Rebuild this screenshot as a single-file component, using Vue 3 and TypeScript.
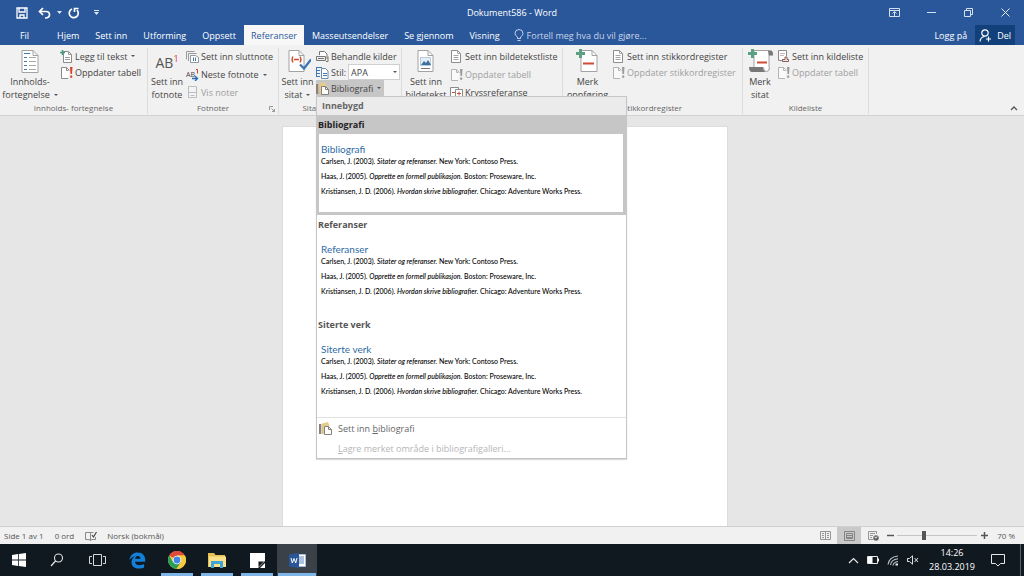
<script setup lang="ts">
import { ref } from 'vue'

interface Small {
  icon: string
  label: string
  arrow?: boolean
  off?: boolean
}
interface Group {
  id: string
  title: string
  icon: string
  lines: string[]
  arrow?: boolean
  launcher?: boolean
  items: Small[]
}

const tabs: string[] = ['Fil', 'Hjem', 'Sett inn', 'Utforming', 'Oppsett', 'Referanser', 'Masseutsendelser', 'Se gjennom', 'Visning']
const active = ref('Referanser')
const zoom = ref(33)
const style = ref('APA')
const chosen = ref('Bibliografi')
const gallery: string[] = ['Bibliografi', 'Referanser', 'Siterte verk']

const groups: Group[] = [
  {
    id: 'toc', title: 'Innholds- fortegnelse', icon: 'b-toc', lines: ['Innholds-', 'fortegnelse'], arrow: true,
    items: [
      { icon: 's-add', label: 'Legg til tekst', arrow: true },
      { icon: 's-update', label: 'Oppdater tabell' },
    ],
  },
  {
    id: 'foot', title: 'Fotnoter', icon: 'b-foot', lines: ['Sett inn', 'fotnote'], launcher: true,
    items: [
      { icon: 's-end', label: 'Sett inn sluttnote' },
      { icon: 's-next', label: 'Neste fotnote', arrow: true },
      { icon: 's-show', label: 'Vis noter', off: true },
    ],
  },
  {
    id: 'cite', title: 'Sitater og bibliografi', icon: 'b-cite', lines: ['Sett inn', 'sitat'], arrow: true,
    items: [],
  },
  {
    id: 'cap', title: 'Bildetekster', icon: 'b-cap', lines: ['Sett inn', 'bildetekst'],
    items: [
      { icon: 's-page', label: 'Sett inn bildetekstliste' },
      { icon: 's-update', label: 'Oppdater tabell', off: true },
      { icon: 's-cross', label: 'Kryssreferanse' },
    ],
  },
  {
    id: 'index', title: 'Stikkordregister', icon: 'b-mark', lines: ['Merk', 'oppføring'],
    items: [
      { icon: 's-page', label: 'Sett inn stikkordregister' },
      { icon: 's-update', label: 'Oppdater stikkordregister', off: true },
    ],
  },
  {
    id: 'auth', title: 'Kildeliste', icon: 'b-auth', lines: ['Merk', 'sitat'],
    items: [
      { icon: 's-auth', label: 'Sett inn kildeliste' },
      { icon: 's-update', label: 'Oppdater tabell', off: true },
    ],
  },
]
</script>

<template>
  <div class="screen">
    <svg class="defs" aria-hidden="true">
      <symbol id="b-toc" viewBox="0 0 26 25">
        <path d="M5 1.500h11l5 5V23.500H5z" fill="#fff" stroke="#a2a2a2" />
        <path d="M16 1.500v5h5" fill="none" stroke="#a2a2a2" />
        <path d="M7 4.500h6M7 8.500h3M7 12.500h3M7 16.500h3M7 20.500h3" stroke="#3d7ab5" />
        <path d="M12 8.500h7M12 12.500h7M12 16.500h7M12 20.500h7" stroke="#a8a8a8" />
      </symbol>
      <symbol id="b-cite" viewBox="0 0 26 25">
        <path d="M4 1.500h10l5 5V22.500H4z" fill="#fff" stroke="#a2a2a2" />
        <path d="M14 1.500v5h5" fill="none" stroke="#a2a2a2" />
        <path d="M8 7.500q-2 3 0 6M15 7.500q2 3 0 6M9 10.500h5" fill="none" stroke="#cf4c33" stroke-width="1.300" />
        <path d="M15 15.500l4 4 7-9" fill="none" stroke="#3b74b5" stroke-width="2.200" />
      </symbol>
      <symbol id="b-cap" viewBox="0 0 26 25">
        <path d="M5 1.500h10l5 5V22.500H5z" fill="#fff" stroke="#a2a2a2" />
        <path d="M15 1.500v5h5" fill="none" stroke="#a2a2a2" />
        <path d="M7.500 8.500h10v8h-10z" fill="#e4eef7" stroke="#b9cad9" />
        <path d="M8 16l3-4 2 2 2-3 3 5z" fill="#3d6f9f" />
        <path d="M8 19.500h9" stroke="#777" />
      </symbol>
      <symbol id="b-mark" viewBox="0 0 26 25">
        <path d="M6 1.500h11l5 5V22.500H6z" fill="#fff" stroke="#a2a2a2" />
        <path d="M17 1.500v5h5" fill="none" stroke="#a2a2a2" />
        <path d="M8 14.500h11" stroke="#cf4c33" stroke-width="2" />
        <path d="M5.500 0v9M1 4.500h9" stroke="#5aa083" stroke-width="3" />
      </symbol>
      <symbol id="b-auth" viewBox="0 0 26 25">
        <path d="M7 1.500h15v19H7z" fill="#fff" stroke="#a2a2a2" />
        <path d="M21 1.500h3q2 0 2 5h-4z" fill="#777" />
        <path d="M2 18h14q0 5 4 5H5q-3 0-3-5z" fill="#777" />
        <path d="M16.500 18.500q0 4 3 4t3-4" fill="#fff" stroke="#999" />
        <path d="M10 13.500h10" stroke="#cf4c33" stroke-width="2" />
        <path d="M5.500 0v9M1 4.500h9" stroke="#5aa083" stroke-width="3" />
      </symbol>
      <symbol id="s-add" viewBox="0 0 13 13">
        <path d="M3.500 1.500h5l3 3v8h-8z" fill="#fff" stroke="#8b8b8b" />
        <path d="M8.500 1.500v3h3M5 7.500h5M5 9.500h5" fill="none" stroke="#9a9a9a" />
        <path d="M2.500 0v5M0 2.500h5" stroke="#4d9878" stroke-width="1.500" />
      </symbol>
      <symbol id="s-update" viewBox="0 0 13 13">
        <path d="M8 12.500H1.500v-11h5l3 3" fill="#fff" stroke="#8b8b8b" />
        <path d="M6.500 1.500v3h2" fill="none" stroke="#8b8b8b" />
        <path d="M10 1h2.500l-.5 7h-1.500zM10.200 9.500h2v2.200h-2z" fill="#d9402b" />
      </symbol>
      <symbol id="s-end" viewBox="0 0 13 13">
        <path d="M.5 9.500v-8h8M2.500 11v-7.500h8" fill="none" stroke="#9a9a9a" />
        <path d="M4.500 5.500h5l3 2v5h-8z" fill="#fff" stroke="#8d99a5" />
        <path d="M7.500 7.500v3.500M9.500 7.500v3.500" stroke="#4679a8" />
      </symbol>
      <symbol id="s-next" viewBox="0 0 13 13">
        <text x="0" y="9" font-size="7" fill="#444" font-family="Open Sans, sans-serif">AB</text>
        <path d="M10 1.500h1.500v4" fill="none" stroke="#d9402b" />
        <path d="M6 10.500h5M9 8l2.500 2.500L9 13" fill="none" stroke="#2f6db3" stroke-width="1.400" />
      </symbol>
      <symbol id="s-show" viewBox="0 0 13 13">
        <path d="M2.500.500v11h8v-11z" fill="#f7f7f7" stroke="#999" />
        <path d="M2.500 6.500h8M4.500 9.500h4" stroke="#999" />
      </symbol>
      <symbol id="s-page" viewBox="0 0 13 13">
        <path d="M1.500.5h6l3 3v9h-9z" fill="#fff" stroke="#8b8b8b" />
        <path d="M7.500.5v3h3M3.500 5.500h5M3.500 7.500h5M3.500 9.500h5" fill="none" stroke="#a5a5a5" />
      </symbol>
      <symbol id="s-cross" viewBox="0 0 13 13">
        <path d="M4 10.500H.5v-9h8V3" fill="#fff" stroke="#8b8b8b" />
        <path d="M5.500 3.500h7v8h-7z" fill="#fff" stroke="#8b8b8b" />
        <path d="M2 6.500h3M7 7.500h4M9 5.500v4" stroke="#c4553d" />
      </symbol>
      <symbol id="s-auth" viewBox="0 0 13 13">
        <path d="M7 10.500H1.500v-10h8V6" fill="#fff" stroke="#8b8b8b" />
        <path d="M3 3.500h5M3 5.500h4" stroke="#c9b8b4" />
        <path d="M5.500 11.500h6v-2h-1.500v-2.500h-2v2.500h-2.500z" fill="#eee" stroke="#8c5a55" />
      </symbol>
      <symbol id="s-manage" viewBox="0 0 13 13">
        <path d="M3.500 5V1.500h5L11 4v5" fill="#fff" stroke="#777" />
        <path d="M.5 6.500h9v4h-9zM2 8.500h6" fill="#eee" stroke="#777" />
        <path d="M10 11.500h2v-5" fill="none" stroke="#777" />
      </symbol>
      <symbol id="s-style" viewBox="0 0 13 13">
        <path d="M1 1.500h5M1 4.500h3M1 7.500h3M1 10.500h3M.5 1v10" stroke="#3d7ab5" />
        <path d="M5.500 2.500h4l2.500 2.500v7.500H5.500z" fill="#fff" stroke="#6f8aa5" />
        <path d="M7 7.500h4M7 9.500h4" stroke="#3d7ab5" />
      </symbol>
      <symbol id="s-bib" viewBox="0 0 13 13">
        <path d="M0 2h2v10H0z" fill="#8b8178" />
        <path d="M2.500 2h2v10h-2z" fill="#b3aaa0" />
        <path d="M3 1.500l6-1.500 1.500 4H5v8H3.500z" fill="#e6cb8b" />
        <path d="M5.500 4.500h4l3 3v5h-7z" fill="#fff" stroke="#85807a" />
        <path d="M9.500 4.500v3h3" fill="none" stroke="#85807a" />
      </symbol>
    </svg>

    <header class="top">
      <div class="titlebar">
        <div class="quick">
          <button aria-label="Lagre"><svg width="12" height="12" viewBox="0 0 12 12"><path d="M1 1h10v10H1zM3 1v4h6V1M4 11V8h4v3" fill="none" stroke="#fff" stroke-width="1.300" /></svg></button>
          <button aria-label="Angre"><svg width="13" height="12" viewBox="0 0 13 12"><path d="M5 1L1.500 4.500 5 8M2 4.500h6q3.500 0 3.500 3.200T7 11" fill="none" stroke="#fff" stroke-width="1.700" /></svg></button>
          <button class="tiny" aria-label="Flere angrevalg"><svg width="5" height="3" viewBox="0 0 5 3"><path d="M0 0h5L2.500 3z" fill="#dfe7f3" /></svg></button>
          <button aria-label="Gjenta"><svg width="12" height="12" viewBox="0 0 12 12"><path d="M4 2a4.500 4.500 0 1 0 5 1M6.500 5V1.500H10.500" fill="none" stroke="#fff" stroke-width="1.700" /></svg></button>
          <button class="more" aria-label="Tilpass"><svg width="5" height="5" viewBox="0 0 5 5"><path d="M0 .5h5" stroke="#dfe7f3" /><path d="M0 2h5L2.500 5z" fill="#dfe7f3" /></svg></button>
        </div>
        <h1>Dokument586 - Word</h1>
        <div class="window">
          <button aria-label="Båndvisning"><svg width="11" height="9" viewBox="0 0 11 9"><path d="M.5.5h10v8H.5zM.5 2.500h10M5.500 8V4M3.500 5.500l2-2 2 2" fill="none" stroke="#d5dfee" /></svg></button>
          <button aria-label="Minimer"><svg width="9" height="9" viewBox="0 0 9 9"><path d="M0 4.500h9" stroke="#d5dfee" /></svg></button>
          <button aria-label="Gjenopprett"><svg width="9" height="9" viewBox="0 0 9 9"><path d="M.5 2.500h6v6h-6zM2.500 2V.5h6v6H7" fill="none" stroke="#d5dfee" /></svg></button>
          <button aria-label="Lukk"><svg width="9" height="9" viewBox="0 0 9 9"><path d="M.5.5l8 8M8.500.5l-8 8" stroke="#e5ebf5" /></svg></button>
        </div>
      </div>
      <nav class="tabs">
        <button v-for="t in tabs" :key="t" :class="{ active: t === active, file: t === 'Fil' }" @click="active = t">{{ t }}</button>
        <button class="tell">
          <svg width="10" height="13" viewBox="0 0 10 13"><path d="M3.500 9.500V8Q1 6.500 1 4.500a4 4 0 0 1 8 0Q9 6.500 6.500 8v1.500zM3.500 11.500h3" fill="none" stroke="#c5d3e8" /></svg>
          Fortell meg hva du vil gjøre...
        </button>
        <span class="grow"></span>
        <button>Logg på</button>
        <button class="share">
          <svg width="13" height="13" viewBox="0 0 13 13"><circle cx="6" cy="4" r="3.200" fill="none" stroke="#fff" stroke-width="1.200" /><path d="M1 12.500Q1.500 8 5.500 7.500M7 10h5M9.500 7.500v5" fill="none" stroke="#fff" stroke-width="1.200" /></svg>
          Del
        </button>
      </nav>
    </header>

    <section class="ribbon">
      <div v-for="g in groups" :key="g.id" class="group" :class="g.id">
        <div class="body">
          <button class="big">
            <span v-if="g.icon === 'b-foot'" class="ab">AB<sup>1</sup></span>
            <svg v-else width="26" height="25"><use :href="'#' + g.icon" /></svg>
            <span>{{ g.lines[0] }}</span>
            <span class="last">{{ g.lines[1] }}<i v-if="g.arrow" class="caret"></i></span>
          </button>
          <div v-if="g.id === 'cite'" class="rows">
            <button class="row"><svg width="13" height="13"><use href="#s-manage" /></svg>Behandle kilder</button>
            <div class="row">
              <svg width="13" height="13"><use href="#s-style" /></svg>
              <label for="stil">Stil:</label>
              <span class="pick">
                <select id="stil" v-model="style"><option>APA</option><option>MLA</option></select>
                <i class="caret"></i>
              </span>
            </div>
            <div class="anchor">
              <button class="row open" aria-expanded="true"><svg width="13" height="13"><use href="#s-bib" /></svg>Bibliografi<i class="caret"></i></button>
              <div class="menu">
                <h2>Innebygd</h2>
                <button v-for="name in gallery" :key="name" class="entry" :class="{ on: name === chosen }" @click="chosen = name">
                  <span class="name">{{ name }}</span>
                  <span class="preview">
                    <span class="head">{{ name }}</span>
                    <span class="src">Carlsen, J. (2003). <em>Sitater og referanser.</em> New York: Contoso Press.</span>
                    <span class="src">Haas, J. (2005). <em>Opprette en formell publikasjon.</em> Boston: Proseware, Inc.</span>
                    <span class="src">Kristiansen, J. D. (2006). <em>Hvordan skrive bibliografier.</em> Chicago: Adventure Works Press.</span>
                  </span>
                </button>
                <div class="commands">
                  <button><svg width="13" height="13"><use href="#s-bib" /></svg><span>Sett inn <u>b</u>ibliografi</span></button>
                  <button disabled><span><u>L</u>agre merket område i bibliografigalleri...</span></button>
                </div>
              </div>
            </div>
          </div>
          <div v-else class="rows">
            <button v-for="s in g.items" :key="s.label" class="row" :disabled="s.off">
              <svg width="13" height="13"><use :href="'#' + s.icon" /></svg>{{ s.label }}<i v-if="s.arrow" class="caret"></i>
            </button>
          </div>
        </div>
        <div class="caption">
          {{ g.title }}
          <svg v-if="g.launcher" class="launcher" width="6" height="6" viewBox="0 0 6 6"><path d="M.5 4V.5H4M2.500 2.500l3 3M5.500 3v2.500H3" fill="none" stroke="#999" /></svg>
        </div>
      </div>
      <button class="collapse" aria-label="Skjul båndet"><svg width="8" height="5" viewBox="0 0 8 5"><path d="M1 4l3-3 3 3" fill="none" stroke="#555" stroke-width="1.300" /></svg></button>
    </section>

    <main class="canvas"><div class="page"></div></main>

    <footer class="status">
      <span>Side 1 av 1</span>
      <span>0 ord</span>
      <svg width="12" height="10" viewBox="0 0 12 10"><path d="M5.500 1.500v8L4 8.500H.5v-7H4zM5.500 9.500L7 8.500h3.500V6M5.500 1.500h3" fill="none" stroke="#888" /><path d="M7 4l1.500 2L11.500 1" fill="none" stroke="#444" stroke-width="1.200" /></svg>
      <span>Norsk (bokmål)</span>
      <span class="grow"></span>
      <button aria-label="Lesemodus"><svg width="11" height="9" viewBox="0 0 11 9"><path d="M.5.5h10v8H.5zM5.500.5v8M2 2.500h2M2 4.500h2M2 6.500h2M7 2.500h2M7 4.500h2M7 6.500h2" fill="none" stroke="#959595" /></svg></button>
      <button class="on" aria-label="Utskriftsoppsett"><svg width="11" height="10" viewBox="0 0 11 10"><path d="M.5.5h10v9H.5zM2.500 2.500h6v5h-6zM3 4.500h5M3 6.500h5" fill="none" stroke="#858585" /></svg></button>
      <button aria-label="Nettoppsett"><svg width="11" height="10" viewBox="0 0 11 10"><path d="M5 8.500H.5v-8h8V3M2 2.500h5M2 4.500h3M2 6.500h2" fill="none" stroke="#959595" /><circle cx="8" cy="7" r="2.800" fill="#666" /><path d="M6.500 6l1.500 1 1-1.500" stroke="#eee" fill="none" /></svg></button>
      <button class="step" aria-label="Zoom ut"><svg width="7" height="7" viewBox="0 0 7 7"><path d="M0 3.500h7" stroke="#555" stroke-width="1.500" /></svg></button>
      <input v-model="zoom" type="range" min="0" max="100" aria-label="Zoom" />
      <button class="step" aria-label="Zoom inn"><svg width="7" height="7" viewBox="0 0 7 7"><path d="M0 3.500h7M3.500 0v7" stroke="#555" stroke-width="1.500" /></svg></button>
      <span class="pct">70 %</span>
    </footer>

    <div class="taskbar">
      <button class="start" aria-label="Start"><svg width="14" height="14" viewBox="0 0 14 14"><path d="M0 2l6-.9v5.500H0zM6.800 1L14 0v6.600H6.800zM0 7.400h6v5.500L0 12zM6.800 7.400H14V14l-7.200-1z" fill="#fff" /></svg></button>
      <button aria-label="Søk"><svg width="14" height="14" viewBox="0 0 14 14"><circle cx="8.500" cy="5" r="4" fill="none" stroke="#e4e6e8" stroke-width="1.100" /><path d="M5.500 8L1 13" stroke="#e4e6e8" stroke-width="1.200" /></svg></button>
      <button aria-label="Oppgavevisning"><svg width="17" height="12" viewBox="0 0 17 12"><path d="M4.500.5h8v11h-8zM3 2.500H.5v7H3M14 2.500h2.500v7H14" fill="none" stroke="#d8dadc" /></svg></button>
      <button aria-label="Edge"><svg width="17" height="17" viewBox="0 0 17 17"><path d="M.5 8C1 3 4.500.5 8.700.5c5 0 7.500 3.500 7.500 7.200v2H6c.2 2.500 2 3.500 4.500 3.500 1.800 0 3.300-.5 4.600-1.200v3.400c-1.500.8-3.200 1.100-5.100 1.100-4.500 0-7.500-2.300-7.500-6.300 0-2.700 1.400-4.800 3.800-6C3.800 4.800 2 6 .5 8zm5.600-1.300h5.300c0-1.800-.9-2.700-2.500-2.700S6.300 5 6.100 6.700z" fill="#1280d8" /></svg></button>
      <button class="run" aria-label="Chrome"><svg width="18" height="18" viewBox="0 0 18 18"><circle cx="9" cy="9" r="9" fill="#f7ca3b" /><path d="M9 9L1.200 4.500A9 9 0 0 1 16.800 4.500H9z" fill="#de4a3b" /><path d="M1.200 4.500A9 9 0 0 0 8.500 18l4.400-6.800L9 9 5 11z" fill="#2d9e58" /><path d="M9 4.500h7.800A9 9 0 0 1 8.500 18l4.400-6.800z" fill="#f7ca3b" /><circle cx="9" cy="9" r="4.300" fill="#fff" /><circle cx="9" cy="9" r="3.400" fill="#4285e8" /></svg></button>
      <button class="run" aria-label="Filutforsker"><svg width="18" height="15" viewBox="0 0 18 15"><path d="M0 0h6l1.500 2H17v12H0z" fill="#e8bf55" /><path d="M1 3.500h17V14H1z" fill="#fbe08c" /><path d="M3 15V8h12v7h-3v-4H6v4z" fill="#3fa4d8" /></svg></button>
      <button class="run" aria-label="Notater"><svg width="15" height="15" viewBox="0 0 15 15"><path d="M0 0h15v8l-7 7H0z" fill="#fff" /><path d="M8.500 14V8.500H14z" fill="#111820" /><path d="M10 15l5-5v5z" fill="#fff" /></svg></button>
      <button class="run current" aria-label="Word"><svg width="17" height="15" viewBox="0 0 17 15"><path d="M8 1.500h8.500v12H8z" fill="#fff" stroke="#a9bfe0" /><path d="M10 4h5M10 6h5M10 8h5M10 10h5" stroke="#5f84bd" /><path d="M0 1.500L10 0v15L0 13.500z" fill="#2a5699" /><path d="M2 5l1.300 5L5 5.500 6.700 10 8 5" fill="none" stroke="#fff" /></svg></button>
      <span class="grow"></span>
      <div class="tray">
        <svg width="11" height="7" viewBox="0 0 11 7"><path d="M1 6l4.500-4.500L10 6" fill="none" stroke="#e8e8e8" stroke-width="1.200" /></svg>
        <svg width="12" height="8" viewBox="0 0 12 8"><path d="M.5.5h10v7H.5z" fill="none" stroke="#e8e8e8" /><path d="M1 1h4.500v6H1zM11 2.500h1v3h-1z" fill="#fff" /></svg>
        <svg width="12" height="11" viewBox="0 0 12 11"><path d="M1 9.500Q2 2 11 1M3.500 10Q4 4.500 11 3.700M6 10.500Q6.500 7 11 6.500" fill="none" stroke="#c4c8cc" stroke-width="1.100" /><path d="M8.500 8.500h2.500v2h-2.500z" fill="#e8e8e8" /></svg>
        <svg width="12" height="10" viewBox="0 0 12 10"><path d="M.5 3.500H2.500L5.500.8v8.400L2.500 6.500H.5zM7.500 3l3.500 4M11 3L7.500 7" fill="none" stroke="#dfe1e3" /></svg>
      </div>
      <div class="clock"><span>14:26</span><span>28.03.2019</span></div>
      <button class="note" aria-label="Varsler"><svg width="14" height="14" viewBox="0 0 14 14"><path d="M.5 1.500h13v9H9.500L7 13l-2.500-2.500H.5z" fill="none" stroke="#e8e8e8" /></svg></button>
    </div>
  </div>
</template>

<style>
body {
  overflow: hidden;
}
</style>

<style scoped>
.screen {
  display: flex;
  flex-direction: column;
  height: 100vh;
  font: 9px/13px "Open Sans", "Noto Sans", sans-serif;
  color: #444;
  background: #e6e6e6;
}
.defs {
  display: none;
}
button {
  display: flex;
  align-items: center;
  justify-content: center;
  margin: 0;
  padding: 0;
  border: 0;
  background: none;
  font: inherit;
  color: inherit;
  white-space: nowrap;
}
svg {
  flex: none;
}
.grow {
  flex: 1;
}
.caret {
  display: inline-block;
  flex: none;
  margin-left: 4px;
  border: 2px solid transparent;
  border-top-color: #555;
  border-bottom: 0;
}

/* Title bar and tabs */
.top {
  background: #2a579a;
  color: #fff;
}
.titlebar {
  display: grid;
  grid-template-columns: 1fr auto 1fr;
  align-items: center;
  height: 25px;
}
.titlebar h1 {
  margin: 0;
  font: inherit;
}
.quick {
  display: flex;
  align-items: center;
  padding-left: 16px;
  gap: 10px;
}
.quick .tiny {
  margin: 0 -4px;
}
.quick .more {
  margin-left: 4px;
}
.window {
  display: flex;
  justify-content: flex-end;
}
.window button {
  width: 37px;
  height: 25px;
}
.tabs {
  display: flex;
  height: 20px;
  padding-right: 9px;
}
.tabs button {
  padding: 0 8px;
}
.tabs .file {
  width: 49px;
}
.tabs .active {
  padding: 0 7px;
  background: #f7f7f7;
  color: #2a579a;
}
.tabs .tell {
  gap: 3px;
  padding: 0 6px;
  color: #c5d3e8;
}
.tabs .share {
  gap: 5px;
  padding: 0 4px;
  background: #12407a;
}

/* Ribbon */
.ribbon {
  display: flex;
  height: 70px;
  background: #f1f1f1;
  border-bottom: 1px solid #d2d2d2;
}
.group {
  display: flex;
  flex-direction: column;
  box-sizing: border-box;
  margin: 3px 0 1px;
  border-right: 1px solid #dcdcdc;
}
.toc { width: 148px; }
.foot { width: 131px; }
.cite { width: 123px; }
.cap { width: 161px; }
.index { width: 180px; }
.auth { width: 126px; }
.body {
  display: flex;
  flex: 1;
  min-height: 0;
}
.big {
  flex: none;
  flex-direction: column;
  justify-content: flex-start;
  height: 54px;
}
.big svg {
  margin: 1px 0;
}
.last {
  display: flex;
  align-items: center;
}
.toc .big { width: 60px; }
.foot .big { width: 38px; }
.cite .big { width: 37px; }
.cap .big { width: 48px; }
.index .big { width: 49px; }
.auth .big { width: 34px; }
.ab {
  height: 27px;
  font-size: 14px;
  line-height: 30px;
  color: #555;
}
.ab sup {
  font-size: 9px;
  line-height: 0;
  color: #d9402b;
}
.rows {
  display: flex;
  flex-direction: column;
  align-items: flex-start;
}
.row {
  display: flex;
  align-items: center;
  gap: 2px;
  height: 16px;
  white-space: nowrap;
}
.row .caret {
  margin-left: 2px;
}
.foot .row,
.cap .row {
  height: 17px;
  margin-bottom: 1px;
}
.row:disabled {
  color: #a0a0a0;
}
.row:disabled svg {
  filter: grayscale(1);
  opacity: 0.6;
}
.pick {
  position: relative;
  display: flex;
}
.pick select {
  width: 52px;
  height: 16px;
  padding: 0 2px;
  border: 1px solid #d0d0d0;
  border-radius: 0;
  background: #fff;
  font: inherit;
  color: inherit;
  appearance: none;
}
.pick .caret {
  position: absolute;
  top: 7px;
  right: 3px;
}
.anchor {
  position: relative;
}
.open {
  padding-right: 3px;
  background: #c6c6c6;
}
.caption {
  position: relative;
  height: 12px;
  font-size: 8px;
  line-height: 12px;
  text-align: center;
  color: #666;
}
.launcher {
  position: absolute;
  right: 3px;
  top: 4px;
}
.collapse {
  align-self: flex-end;
  margin: 0 6px 4px auto;
}

/* Bibliography gallery */
.menu {
  position: absolute;
  z-index: 2;
  top: 100%;
  left: 0;
  box-sizing: border-box;
  width: 311px;
  border: 1px solid #c6c6c6;
  background: #fff;
  box-shadow: 0 1px 1px #d8d8d8;
}
.menu h2 {
  margin: 0;
  padding-left: 5px;
  background: #ebebeb;
  font-size: 9px;
  line-height: 18px;
  color: #666;
}
.entry {
  display: block;
  box-sizing: border-box;
  width: 100%;
  height: 100px;
  padding: 0 3px 3px 1px;
  text-align: left;
}
.entry.on {
  background: #c6c6c6;
}
.name {
  display: block;
  font-weight: bold;
  line-height: 19px;
  color: #555;
}
.on .name {
  color: #222;
}
.preview {
  display: block;
  box-sizing: border-box;
  height: 78px;
  margin-left: 1px;
  padding: 11px 2px 0;
  background: #fff;
  font-family: Lato, sans-serif;
}
.head {
  display: block;
  font-size: 10px;
  line-height: 9px;
  color: #2e6ca5;
}
.src {
  display: block;
  font-size: 7px;
  font-weight: 500;
  line-height: 15px;
  color: #000;
}
.commands {
  margin-top: 2px;
  border-top: 1px solid #e1e1e1;
}
.commands button {
  justify-content: flex-start;
  gap: 6px;
  width: 100%;
  height: 20px;
  padding-left: 2px;
  color: #666;
}
.commands button:disabled {
  padding-left: 21px;
  color: #b5b5b5;
}

/* Document */
.canvas {
  display: flex;
  flex: 1;
  justify-content: center;
  min-height: 0;
  padding: 10px 15px 0 0;
}
.page {
  width: 444px;
  border: 1px solid #dcdcdc;
  border-bottom: 0;
  background: #fff;
}

/* Status bar */
.status {
  display: flex;
  align-items: center;
  height: 17px;
  padding: 0 9px 0 4px;
  border-top: 1px solid #d0d0d0;
  background: #f1f1f1;
  font-size: 8px;
  color: #555;
}
.status > span:not(.grow) {
  margin-right: 11px;
}
.status > svg {
  margin-right: 10px;
}
.status button {
  width: 24px;
  height: 17px;
}
.status .on {
  background: #c9c9c9;
}
.status .step {
  width: 10px;
}
.status input {
  width: 80px;
  height: 10px;
  margin: 0 2px;
  background: linear-gradient(#c5c5c5, #c5c5c5) center / 100% 1px no-repeat;
  appearance: none;
}
.status input::-webkit-slider-thumb {
  width: 4px;
  height: 9px;
  background: #555;
  appearance: none;
}
.status .pct {
  margin-left: 8px;
}
.status > .pct:not(.grow) {
  margin-right: 0;
}

/* Taskbar */
.taskbar {
  display: flex;
  height: 32px;
  background: #101820;
  color: #fff;
}
.taskbar button {
  width: 40px;
}
.taskbar .start {
  width: 37px;
}
.taskbar .run {
  background: linear-gradient(#7fb4e6, #7fb4e6) bottom / 32px 3px no-repeat;
}
.taskbar .current {
  background: linear-gradient(#7fb4e6, #7fb4e6) bottom / 38px 3px no-repeat, #3b4149;
}
.tray {
  display: flex;
  align-items: center;
  gap: 8px;
}
.clock {
  display: flex;
  flex-direction: column;
  align-items: center;
  justify-content: center;
  margin-left: 10px;
  line-height: 14px;
}
.taskbar .note {
  width: 46px;
  margin-right: 3px;
  border-right: 1px solid #5a6068;
}
</style>
